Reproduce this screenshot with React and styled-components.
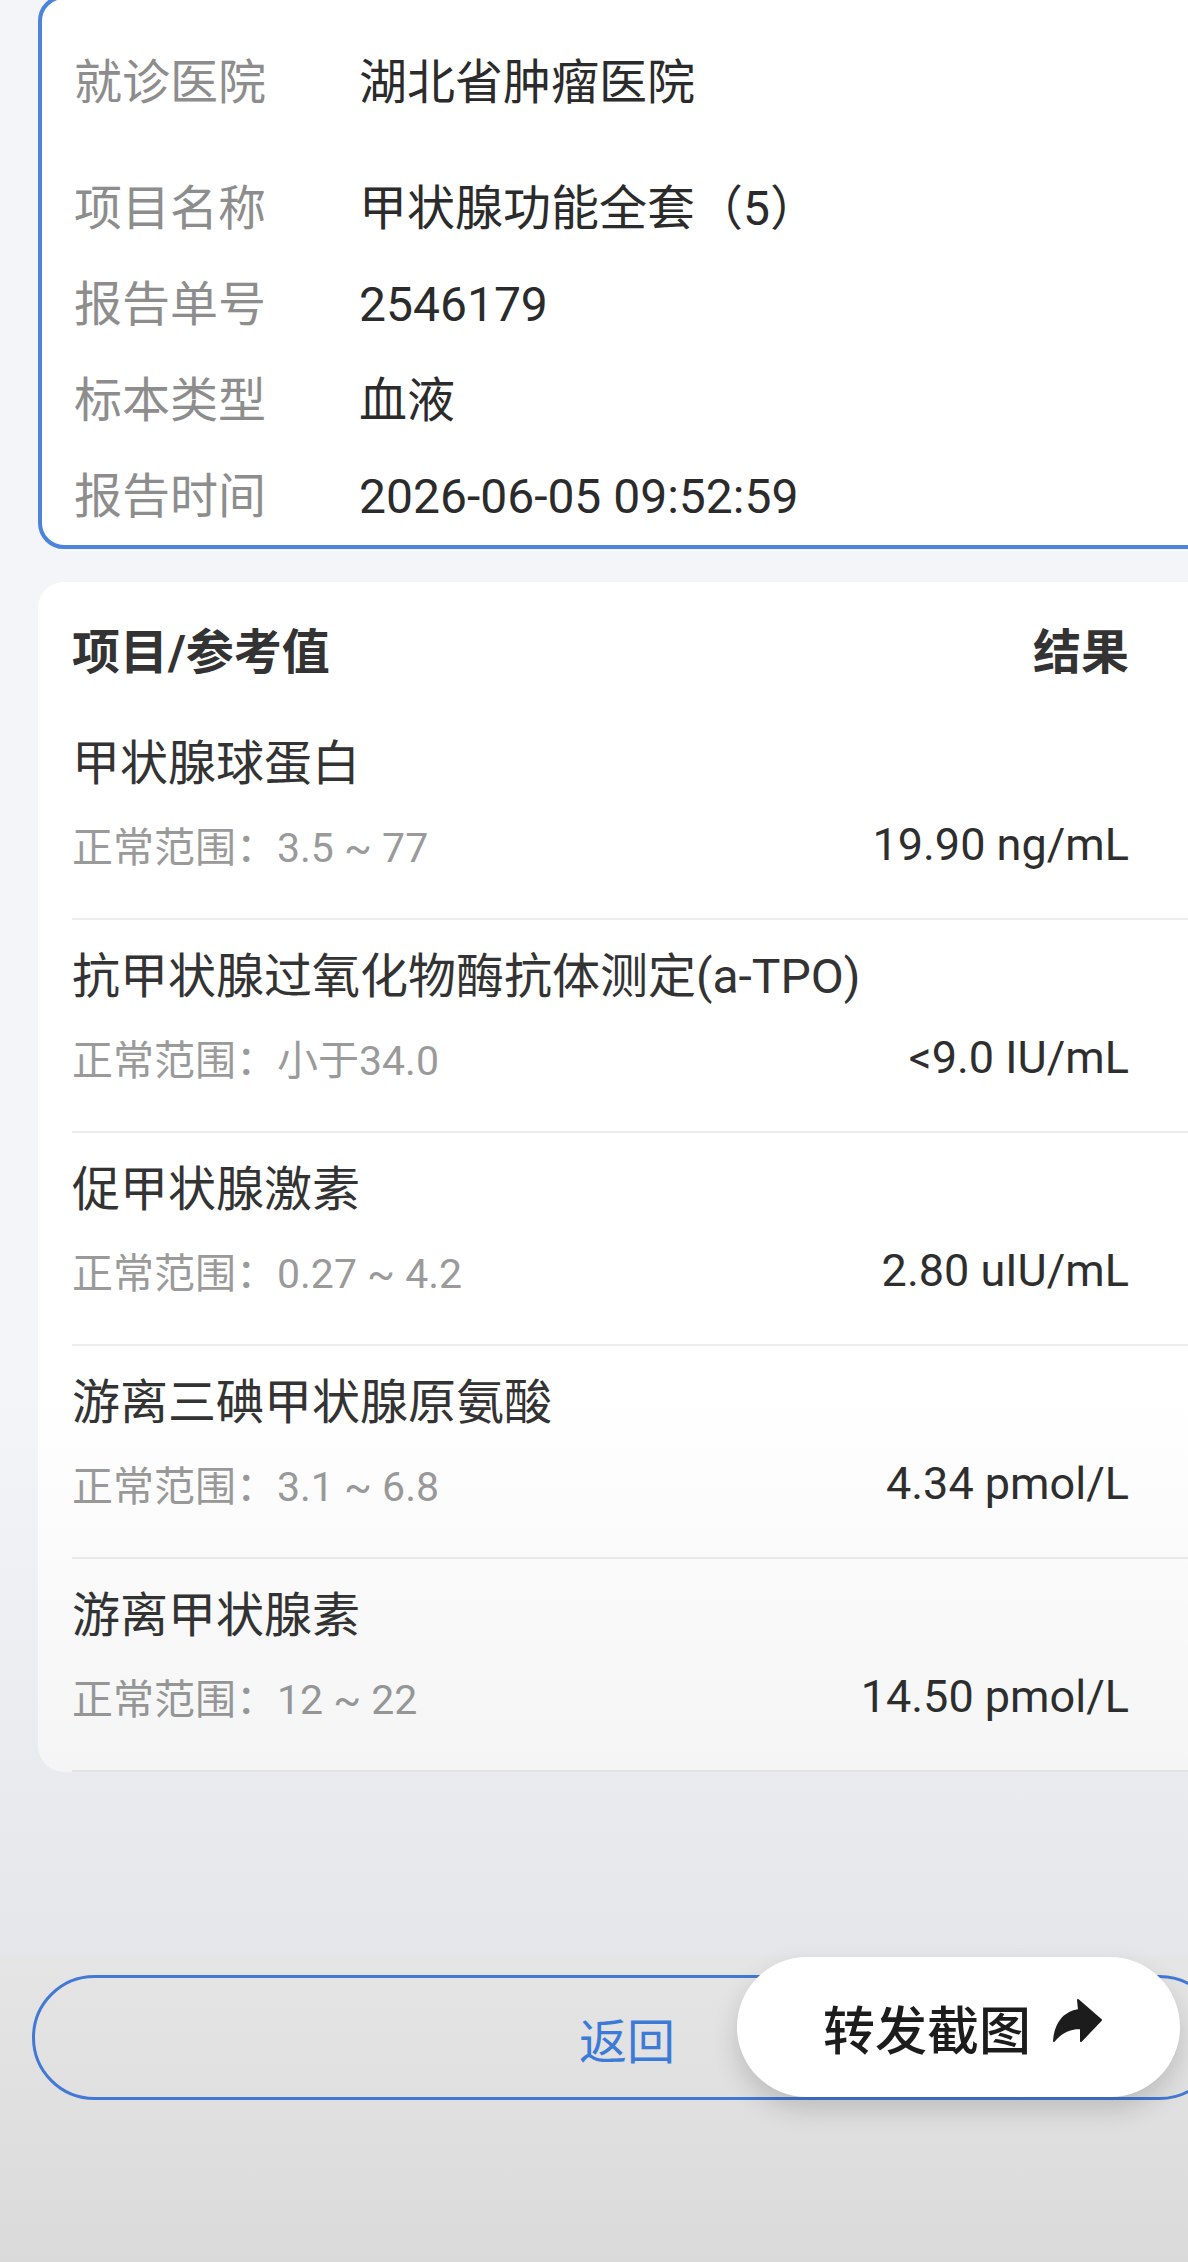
import React from 'react';
import styled, { createGlobalStyle } from 'styled-components';

const GlobalStyle = createGlobalStyle`
  html, body {
    margin: 0;
    padding: 0;
  }
  body {
    width: 1188px;
    overflow-x: hidden;
    background: #f3f5f8;
    font-family: Roboto, "Noto Sans CJK SC", sans-serif;
  }
`;

const Page = styled.div`
  position: relative;
  width: 1264px;
  height: 2262px;
  display: flex;
  flex-direction: column;
  background: #f3f5f8;
`;

const DimOverlay = styled.div`
  position: absolute;
  left: 0;
  right: 0;
  top: 1380px;
  height: 576px;
  pointer-events: none;
  background: linear-gradient(to bottom, rgba(20, 30, 40, 0), rgba(20, 30, 40, 0.065));
`;

const InfoCard = styled.section`
  margin: -5px 0 0 38px;
  width: 1188px;
  box-sizing: border-box;
  background: #fff;
  border: 4px solid #4c84dc;
  border-radius: 26px;
  padding: 36px 0 0 32px;
`;

const InfoRow = styled.div`
  display: grid;
  grid-template-columns: 285px 1fr;
  height: 96px;
  line-height: 96px;
  font-size: 48px;
  margin-bottom: ${(p) => (p.$first ? '30px' : '0')};
`;

const InfoLabel = styled.span`
  color: #8d8d8d;
`;

const InfoValue = styled.span`
  color: #2b2b2b;
`;

const TableCard = styled.section`
  margin: 33px 0 0 38px;
  width: 1188px;
  box-sizing: border-box;
  background: #fff;
  border-radius: 26px;
  overflow: hidden;
  padding: 36px 0 0 34px;
`;

const TableHeader = styled.div`
  display: flex;
  justify-content: space-between;
  padding-right: 97px;
  margin-bottom: 19px;
  line-height: 70px;
  font-size: 48px;
  font-weight: 700;
  color: #333;
`;

const ItemRow = styled.div`
  padding: 27px 97px 44px 0;
  border-bottom: 2px solid #ececec;
`;

const ItemName = styled.div`
  line-height: 60px;
  font-size: 48px;
  color: #333;
`;

const ItemSub = styled.div`
  display: flex;
  justify-content: space-between;
  align-items: center;
  margin-top: 20px;
  height: 60px;
`;

const Range = styled.span`
  font-size: 41px;
  color: #9a9a9a;
`;

const Result = styled.span`
  font-size: 45px;
  color: #2e2e2e;
`;

const Footer = styled.footer`
  position: relative;
  margin-top: auto;
  height: 306px;
  box-sizing: border-box;
  padding: 19px 42px 0 32px;
  background: linear-gradient(to bottom, #e5e5e5, #dadada);
`;

const BackButton = styled.button`
  display: flex;
  align-items: center;
  justify-content: center;
  width: 100%;
  height: 125px;
  box-sizing: border-box;
  border: 3px solid #4379d4;
  border-radius: 63px;
  background: transparent;
  color: #3b7ad6;
  font-family: inherit;
  font-size: 48px;
  padding: 0;
`;

const ShareButton = styled.button`
  position: absolute;
  top: 1px;
  left: 737px;
  width: 443px;
  height: 140px;
  box-sizing: border-box;
  display: flex;
  align-items: center;
  gap: 8px;
  padding: 0 0 0 86px;
  border: none;
  border-radius: 70px;
  background: #fff;
  box-shadow: 0 12px 26px rgba(0, 0, 0, 0.16);
  color: #1c1c1c;
  font-family: inherit;
  font-size: 52px;
  font-weight: 500;
`;

const ShareIcon = () => (
  <svg width="80" height="80" viewBox="0 0 80 80" fill="#1c1c1c">
    <path d="M39 13 L62 33 L42 54 L42 41 C30 41 22 45 15 54 C16 38 24 25 40 23 Z" strokeLinejoin="round" stroke="#1c1c1c" strokeWidth="2" />
  </svg>
);

const info = [
  { label: '就诊医院', value: '湖北省肿瘤医院' },
  { label: '项目名称', value: '甲状腺功能全套（5）' },
  { label: '报告单号', value: '2546179' },
  { label: '标本类型', value: '血液' },
  { label: '报告时间', value: '2026-06-05 09:52:59' },
];

const items = [
  { name: '甲状腺球蛋白', range: '3.5 ~ 77', result: '19.90 ng/mL' },
  { name: '抗甲状腺过氧化物酶抗体测定(a-TPO)', range: '小于34.0', result: '<9.0 IU/mL' },
  { name: '促甲状腺激素', range: '0.27 ~ 4.2', result: '2.80 uIU/mL' },
  { name: '游离三碘甲状腺原氨酸', range: '3.1 ~ 6.8', result: '4.34 pmol/L' },
  { name: '游离甲状腺素', range: '12 ~ 22', result: '14.50 pmol/L' },
];

const App = () => (
  <>
    <GlobalStyle />
    <Page>
      <InfoCard>
        {info.map((row, index) => (
          <InfoRow key={row.label} $first={index === 0}>
            <InfoLabel>{row.label}</InfoLabel>
            <InfoValue>{row.value}</InfoValue>
          </InfoRow>
        ))}
      </InfoCard>

      <TableCard>
        <TableHeader>
          <span>项目/参考值</span>
          <span>结果</span>
        </TableHeader>
        {items.map((item) => (
          <ItemRow key={item.name}>
            <ItemName>{item.name}</ItemName>
            <ItemSub>
              <Range>正常范围：{item.range}</Range>
              <Result>{item.result}</Result>
            </ItemSub>
          </ItemRow>
        ))}
      </TableCard>

      <DimOverlay />

      <Footer>
        <BackButton>返回</BackButton>
        <ShareButton>
          <span>转发截图</span>
          <ShareIcon />
        </ShareButton>
      </Footer>
    </Page>
  </>
);

export default App;
